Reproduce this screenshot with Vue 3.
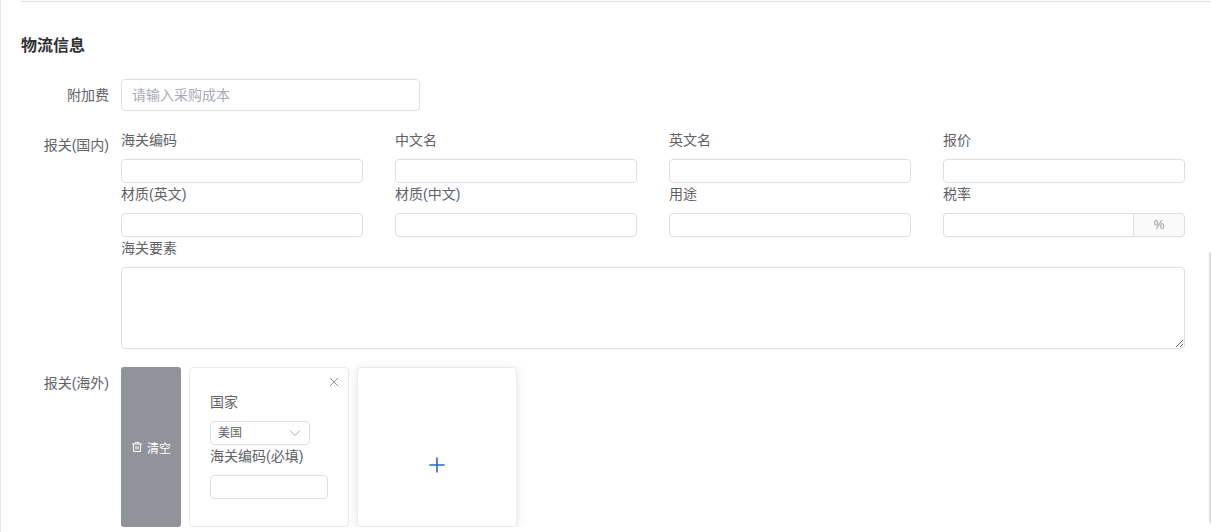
<script setup>
import { ref } from 'vue'

const surcharge = ref('')
const elements = ref('')
const country = ref('us')
const overseasCode = ref('')

const fields = ref([
  { id: 'hs-code', label: '海关编码', value: '' },
  { id: 'name-zh', label: '中文名', value: '' },
  { id: 'name-en', label: '英文名', value: '' },
  { id: 'price', label: '报价', value: '' },
  { id: 'material-en', label: '材质(英文)', value: '' },
  { id: 'material-zh', label: '材质(中文)', value: '' },
  { id: 'usage', label: '用途', value: '' },
  { id: 'tax-rate', label: '税率', value: '', suffix: '%' }
])
</script>

<template>
  <main class="page">
    <h2 class="title">物流信息</h2>
    <form class="form" @submit.prevent>
      <div class="row">
        <label class="row-label" for="surcharge">附加费</label>
        <div class="row-content">
          <input id="surcharge" v-model="surcharge" class="input large" type="text" placeholder="请输入采购成本" />
        </div>
      </div>

      <div class="row" role="group" aria-labelledby="domestic">
        <span id="domestic" class="row-label">报关(国内)</span>
        <div class="row-content">
          <div class="fields">
            <div v-for="f in fields" :key="f.id" class="field">
              <label class="field-label" :for="f.id">{{ f.label }}</label>
              <div class="control">
                <input :id="f.id" v-model="f.value" class="input" :class="{ joined: f.suffix }" type="text" />
                <span v-if="f.suffix" class="suffix">{{ f.suffix }}</span>
              </div>
            </div>
          </div>
          <div class="field">
            <label class="field-label" for="elements">海关要素</label>
            <textarea id="elements" v-model="elements" class="textarea"></textarea>
          </div>
        </div>
      </div>

      <div class="row" role="group" aria-labelledby="overseas">
        <span id="overseas" class="row-label">报关(海外)</span>
        <div class="row-content cards">
          <button type="button" class="clear">
            <svg class="trash" viewBox="0 0 12 12" fill="none" stroke="currentColor" aria-hidden="true">
              <path d="M1 3H11M4 2.5V1.5H8V2.5M2.5 3V10.5H9.5V3M5 5V8.5M7 5V8.5" />
            </svg>
            <span>清空</span>
          </button>
          <div class="card">
            <button type="button" class="close" aria-label="关闭">
              <svg viewBox="0 0 10 10" fill="none" stroke="currentColor" aria-hidden="true">
                <path d="M1 1L9 9M9 1L1 9" />
              </svg>
            </button>
            <div class="field">
              <label class="field-label" for="country">国家</label>
              <div class="select-wrap">
                <select id="country" v-model="country" class="input select">
                  <option value="us">美国</option>
                </select>
                <svg class="chevron" viewBox="0 0 12 8" fill="none" stroke="currentColor" aria-hidden="true">
                  <path d="M1 1.5L6 6.5L11 1.5" />
                </svg>
              </div>
            </div>
            <div class="field">
              <label class="field-label" for="overseas-code">海关编码(必填)</label>
              <input id="overseas-code" v-model="overseasCode" class="input" type="text" />
            </div>
          </div>
          <button type="button" class="card add" aria-label="添加">
            <svg viewBox="0 0 16 16" fill="none" stroke="currentColor" stroke-width="1.6" aria-hidden="true">
              <path d="M8 0.4V15.6M0.4 8H15.6" />
            </svg>
          </button>
        </div>
      </div>
    </form>
    <div class="scroll-thumb"></div>
  </main>
</template>

<style>
html,
body {
  overflow: hidden;
  background: #fff;
}
</style>

<style scoped>
* {
  box-sizing: border-box;
}

.page {
  position: relative;
  min-height: 100vh;
  padding: 1px 0 0 20px;
  border-left: 1px solid #e6e6e6;
  color: #606266;
  font-family: "Liberation Sans", "Noto Sans CJK SC", sans-serif;
  font-size: 14px;
}

.title {
  margin: 0;
  padding: 32px 0 22px;
  border-top: 1px solid #dcdfe6;
  color: #303133;
  font-size: 16px;
  font-weight: 700;
  line-height: 23px;
}

.form {
  display: flex;
  flex-direction: column;
  gap: 18px;
  padding-right: 26px;
}

.row {
  display: flex;
}

.row-label {
  flex: 0 0 100px;
  padding-right: 12px;
  line-height: 32px;
  text-align: right;
}

.row-content {
  flex: 1;
  min-width: 0;
}

.fields {
  display: grid;
  grid-template-columns: repeat(4, 1fr);
  column-gap: 32px;
}

.field-label {
  display: block;
  margin-bottom: 8px;
  line-height: 22px;
}

.control {
  display: flex;
}

.input,
.textarea {
  display: block;
  width: 100%;
  min-width: 0;
  height: 24px;
  margin: 0;
  padding: 0 7px;
  border: 1px solid #dcdfe6;
  border-radius: 4px;
  outline: none;
  background: #fff;
  color: #606266;
  font-family: inherit;
  font-size: 12px;
}

.large {
  width: 299px;
  height: 32px;
  padding: 0 10px;
  font-size: 14px;
}

.large::placeholder {
  color: #a8abb2;
}

.joined {
  flex: 1;
  border-right: 0;
  border-radius: 4px 0 0 4px;
}

.suffix {
  flex: 0 0 52px;
  border: 1px solid #dcdfe6;
  border-radius: 0 4px 4px 0;
  background: #fafafa;
  color: #909399;
  font-size: 12px;
  line-height: 22px;
  text-align: center;
}

.textarea {
  height: 82px;
  padding: 5px 11px;
  resize: vertical;
}

.cards {
  display: flex;
  gap: 8px;
  clip-path: inset(-20px -20px 0);
}

.clear {
  display: flex;
  align-items: center;
  justify-content: center;
  gap: 4px;
  width: 60px;
  padding: 0;
  border: 0;
  border-radius: 3px;
  background: #909399;
  color: #fff;
  font-family: inherit;
  font-size: 12px;
}

.trash {
  width: 12px;
  height: 12px;
}

.card {
  position: relative;
  width: 160px;
  height: 160px;
  padding: 23px 20px 0;
  border: 1px solid #ebebeb;
  border-radius: 4px;
  background: #fff;
}

.close {
  position: absolute;
  top: 9px;
  right: 9px;
  width: 10px;
  height: 10px;
  padding: 0;
  border: 0;
  background: none;
  color: #909399;
}

.close svg {
  display: block;
}

.select-wrap {
  position: relative;
  width: 100px;
}

.select {
  appearance: none;
}

.chevron {
  position: absolute;
  top: 8px;
  right: 9px;
  width: 12px;
  height: 8px;
  color: #a8abb2;
  pointer-events: none;
}

.add {
  display: flex;
  align-items: center;
  justify-content: center;
  padding: 36px 0 0;
  box-shadow: 0 2px 12px rgba(0, 0, 0, 0.1);
  color: #2b65c9;
}

.add svg {
  width: 16px;
  height: 16px;
}

.scroll-thumb {
  position: absolute;
  top: 252px;
  right: 0;
  width: 2px;
  height: 271px;
  border-radius: 2px 0 0 2px;
  background: #dddee0;
}
</style>
